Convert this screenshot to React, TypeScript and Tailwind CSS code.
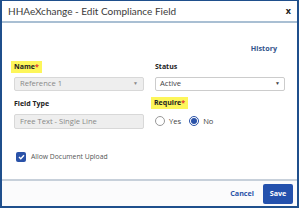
export default function App() {
  return (
    <div
      className="w-[299px] h-[208px] bg-[#1f4f8c] p-[2px] pt-px"
      style={{ fontFamily: '"Open Sans", "Liberation Sans", sans-serif' }}
    >
      <div className="flex h-full flex-col bg-white">
        {/* header */}
        <div className="flex h-[22px] shrink-0 items-center justify-between border-b-2 border-[#a9bfd3] pl-[6px] pr-[6px]">
          <span className="font-['Lato',sans-serif] text-[10px] text-[#3a3a3a]">HHAeXchange - Edit Compliance Field</span>
          <span className="text-[9px] font-bold text-[#222]">x</span>
        </div>

        {/* body */}
        <div className="flex-1 px-[12px] pt-[20px]">
          <div className="flex justify-end pr-[8px]">
            <span className="text-[7.2px] font-bold text-[#34558c]">History</span>
          </div>

          <div className="mt-[-3px] grid grid-cols-2 gap-x-[11px]">
            <div>
              <span className="ml-[-3px] inline-block bg-[#fdf65a] px-[3px] py-[1px] text-[7px] font-bold leading-[10px] text-[#222]">
                Name<span className="text-[#d33]">*</span>
              </span>
              <div className="mt-[2px] flex h-[14px] items-center justify-between rounded-[2px] border border-[#d8d8d8] bg-[#eee] px-[5px] text-[7.6px] text-[#888]">
                <span>Reference 1</span>
                <span className="text-[5px]">▼</span>
              </div>
            </div>
            <div>
              <span className="inline-block py-[1px] text-[7px] font-bold leading-[10px] text-[#222]">Status</span>
              <div className="mt-[2px] flex h-[14px] items-center justify-between rounded-[2px] border border-[#ccc] bg-white px-[4px] text-[7.6px] text-[#444]">
                <span>Active</span>
                <span className="text-[5px]">▼</span>
              </div>
            </div>

            <div className="mt-[-3px]">
              <span className="inline-block py-[1px] text-[7px] font-bold leading-[10px] text-[#222]">Field Type</span>
              <div className="mt-[2px] flex h-[15px] items-center rounded-[2px] border border-[#d8d8d8] bg-[#eee] px-[5px] text-[7.6px] text-[#888]">
                Free Text - Single Line
              </div>
            </div>
            <div className="mt-[-4px]">
              <span className="ml-[-4px] inline-block bg-[#fdf65a] px-[3px] py-[1px] text-[7px] font-bold leading-[10px] text-[#222]">
                Require<span className="text-[#d33]">*</span>
              </span>
              <div className="mt-[5px] flex items-center gap-[4px] text-[7.6px] text-[#444]">
                <span className="h-[10px] w-[10px] rounded-full border border-[#999] bg-white" />
                <span>Yes</span>
                <span className="ml-[4px] flex h-[10px] w-[10px] items-center justify-center rounded-full border border-[#2a52a8] bg-white">
                  <span className="h-[6px] w-[6px] rounded-full bg-[#2a52a8]" />
                </span>
                <span>No</span>
              </div>
            </div>
          </div>

          <div className="mt-[23px] flex items-center gap-[5px] pl-[2px]">
            <span className="flex h-[10px] w-[10px] items-center justify-center rounded-[2px] bg-[#2a52a8]">
              <svg width="7" height="6" viewBox="0 0 7 6">
                <path d="M1 3 L2.8 4.8 L6 1.2" fill="none" stroke="white" strokeWidth="1.4" />
              </svg>
            </span>
            <span className="text-[6.8px] text-[#555]">Allow Document Upload</span>
          </div>
        </div>

        {/* footer */}
        <div className="flex h-[27px] shrink-0 items-center justify-end gap-[9px] border-t-2 border-[#c7d0da] bg-[#fbfbfc] pr-[4px]">
          <span className="text-[7.2px] font-bold text-[#2a52a8]">Cancel</span>
          <span className="flex h-[20px] w-[30px] items-center justify-center rounded-[2px] bg-[#2451ad] text-[7.2px] font-bold text-white">
            Save
          </span>
        </div>
      </div>
    </div>
  );
}
